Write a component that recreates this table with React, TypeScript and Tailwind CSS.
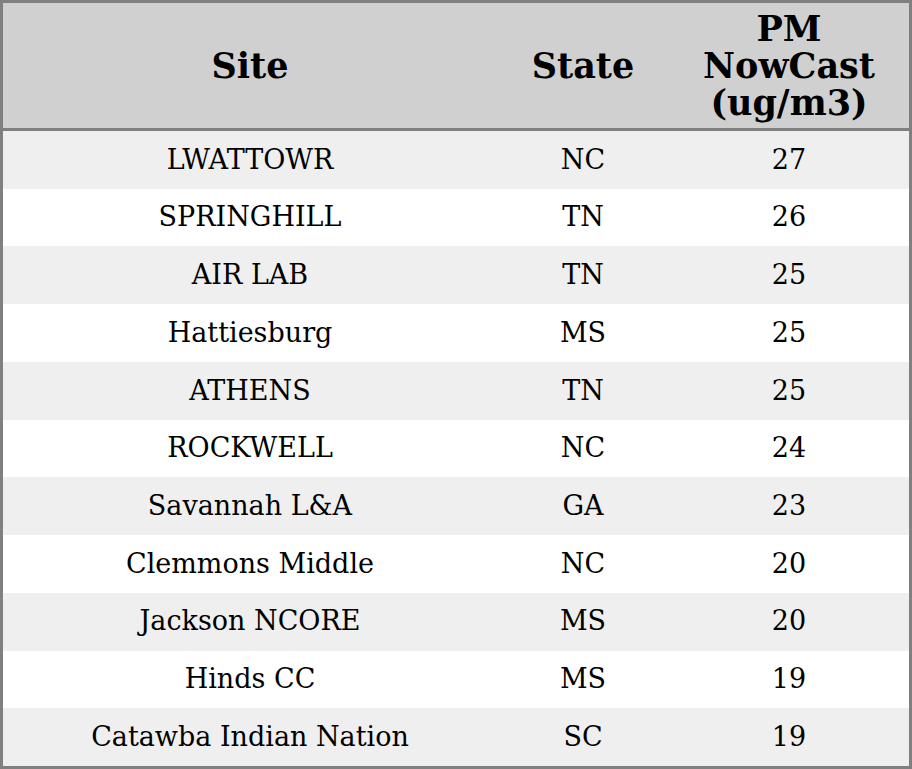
const rows = [
  { site: "LWATTOWR", state: "NC", pm: 27 },
  { site: "SPRINGHILL", state: "TN", pm: 26 },
  { site: "AIR LAB", state: "TN", pm: 25 },
  { site: "Hattiesburg", state: "MS", pm: 25 },
  { site: "ATHENS", state: "TN", pm: 25 },
  { site: "ROCKWELL", state: "NC", pm: 24 },
  { site: "Savannah L&A", state: "GA", pm: 23 },
  { site: "Clemmons Middle", state: "NC", pm: 20 },
  { site: "Jackson NCORE", state: "MS", pm: 20 },
  { site: "Hinds CC", state: "MS", pm: 19 },
  { site: "Catawba Indian Nation", state: "SC", pm: 19 },
];

function App() {
  return (
    <div className="w-[912px] h-[769px] border-[3px] border-[#808080] flex flex-col bg-white font-['DejaVu_Serif',serif] text-black">
      <div className="h-[128px] shrink-0 grid grid-cols-[494px_172px_1fr] items-center bg-[#d0d0d0] border-b-[3px] border-[#808080] text-[35px] font-bold leading-[37px] text-center">
        <div>Site</div>
        <div>State</div>
        <div>
          PM
          <br />
          NowCast
          <br />
          (ug/m3)
        </div>
      </div>
      <div className="flex-1 flex flex-col">
        {rows.map((r, i) => (
          <div
            key={r.site}
            className={`flex-1 grid grid-cols-[494px_172px_1fr] items-center text-center text-[27px] ${
              i % 2 === 0 ? "bg-[#efefef]" : "bg-white"
            }`}
          >
            <div>{r.site}</div>
            <div>{r.state}</div>
            <div>{r.pm}</div>
          </div>
        ))}
      </div>
    </div>
  );
}

export default App;
